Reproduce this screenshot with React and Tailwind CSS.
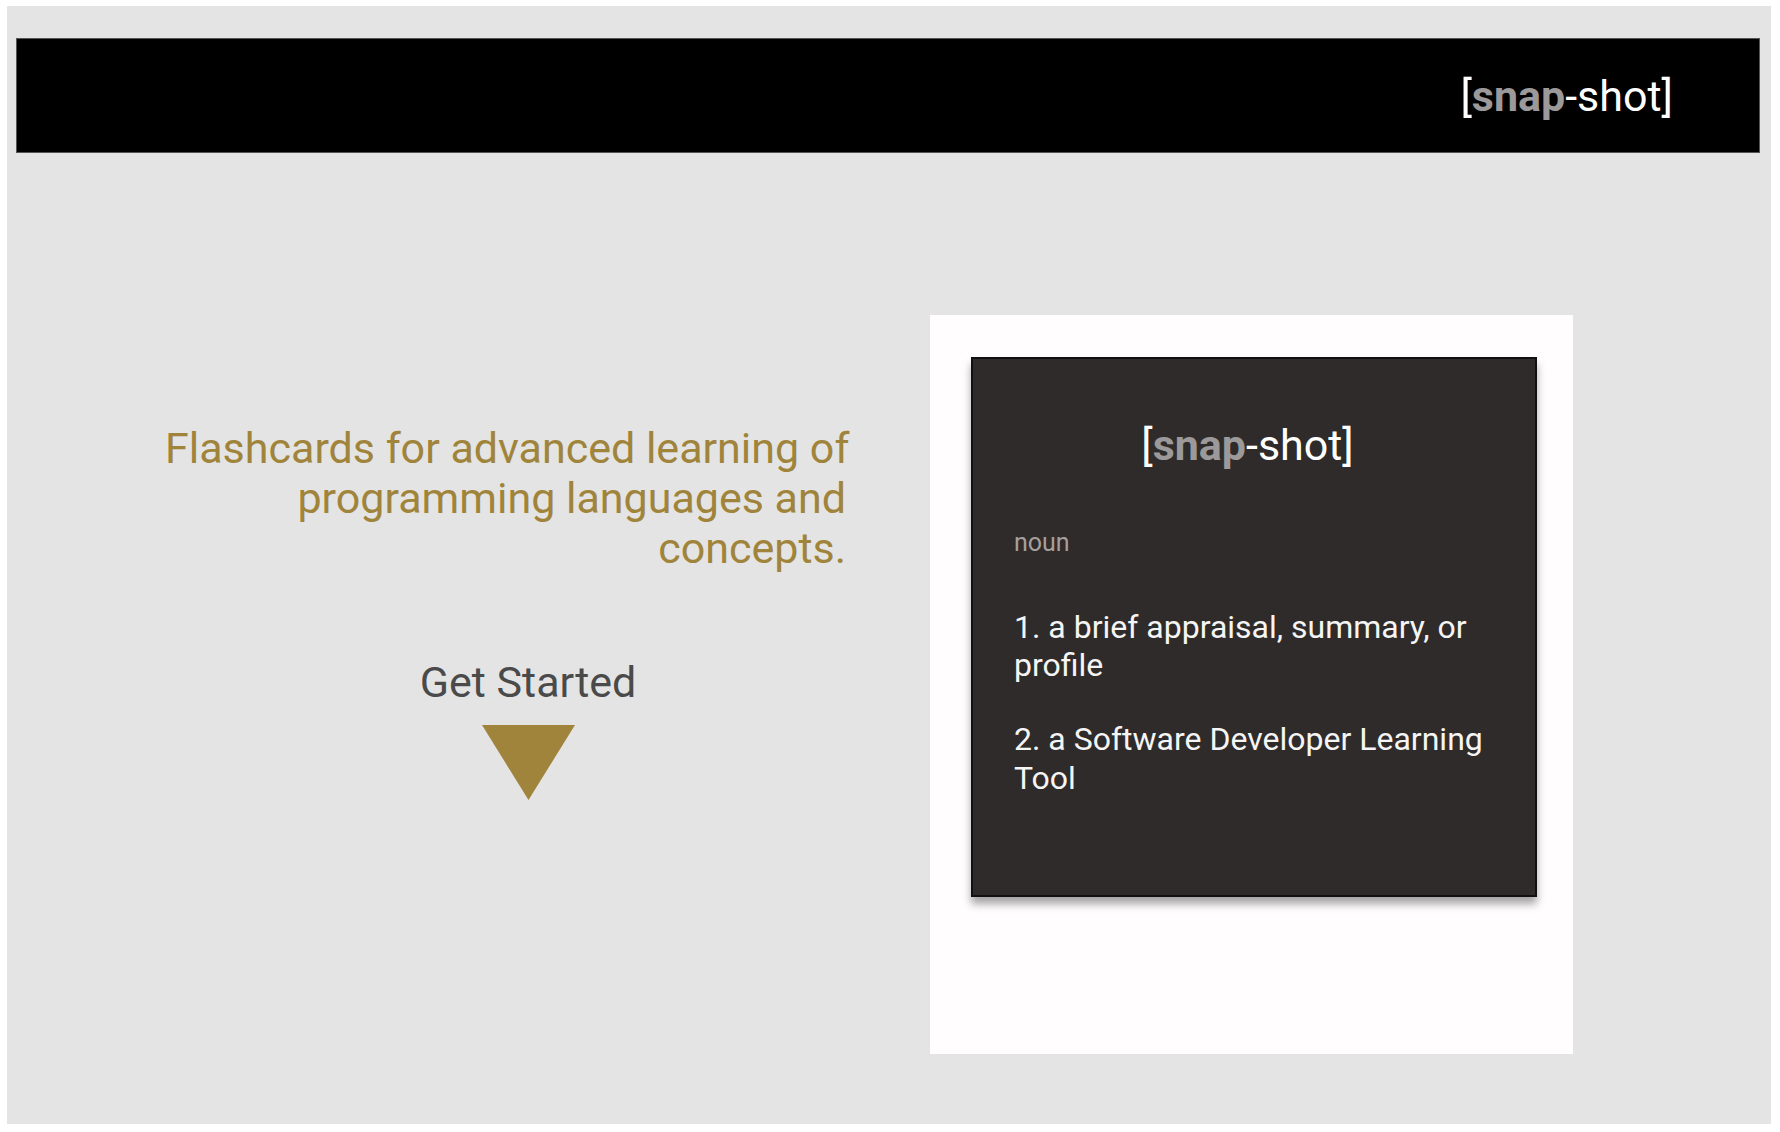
import React from 'react';

const Logo = ({ className = '' }) => (
  <span className={className}>
    [<span className="font-bold text-[#9b9999]">snap</span>-shot]
  </span>
);

export default function App() {
  return (
    <div className="bg-white min-h-screen pt-[6px] pl-[7px] pr-[9px] pb-[8px] font-['Roboto',sans-serif]">
      <div className="bg-[#e4e4e4] h-[1118px] pt-[32px] pl-[9px] pr-[11px]">
        {/* header */}
        <header className="h-[115px] bg-black border border-[#555] flex items-center justify-end pr-[86px]">
          <Logo className="text-[43px] leading-[48px] text-white" />
        </header>

        {/* main */}
        <div className="flex items-start mt-[162px]">
          <div className="ml-[149px] w-[681px] mt-[108px]">
            <p className="text-right text-[43px] leading-[50px] text-[#a0843b] whitespace-nowrap">
              Flashcards for advanced learning of
              <br />
              programming languages and
              <br />
              concepts.
            </p>
            <div className="ml-[213px] w-[300px] mt-[84px] flex flex-col items-center">
              <span className="text-[43px] leading-[50px] text-[#4a4a4a]">Get Started</span>
              <svg width="93" height="75" viewBox="0 0 93 75" className="mt-[18px]">
                <polygon points="0,0 93,0 46.5,75" fill="#a0843b" />
              </svg>
            </div>
          </div>

          <div className="ml-[84px] w-[643px] h-[739px] bg-[#fffdfd] pt-[42px] pl-[41px]">
            <div className="w-[566px] h-[540px] bg-[#2f2b2a] border-2 border-[#111] shadow-[0_7px_8px_rgba(0,0,0,0.35)] px-[41px] pt-[62px]">
              <div className="text-center mr-[13px]">
                <Logo className="text-[43px] leading-[48px] text-white" />
              </div>
              <p className="mt-[59px] text-[25px] leading-[30px] text-[#a5a09e]">noun</p>
              <p className="mt-[50px] text-[32px] leading-[38px] text-[#f5f5f5]">
                1. a brief appraisal, summary, or profile
              </p>
              <p className="mt-[36px] text-[32px] leading-[39px] text-[#f5f5f5]">
                2. a Software Developer Learning Tool
              </p>
            </div>
          </div>
        </div>
      </div>
    </div>
  );
}
